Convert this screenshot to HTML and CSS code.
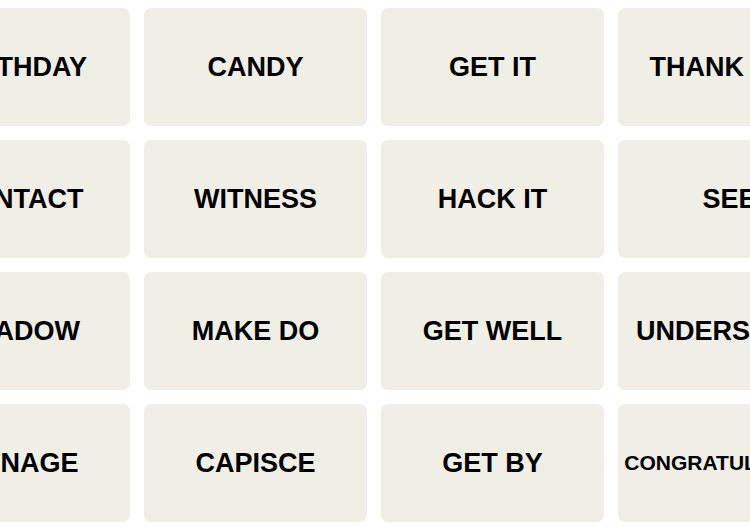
FILE: index.html
```html
<!DOCTYPE html>
<html lang="en">
<head>
  <meta charset="UTF-8" />
  <meta name="viewport" content="width=device-width, initial-scale=1.0"/>
  <title>Connections</title>
  <link rel="stylesheet" href="styles.css">
</head>
<body>
  <div class="board">
    <button class="tile">BIRTHDAY</button>
    <button class="tile">CANDY</button>
    <button class="tile">GET IT</button>
    <button class="tile">THANK YOU</button>

    <button class="tile">CONTACT</button>
    <button class="tile">WITNESS</button>
    <button class="tile">HACK IT</button>
    <button class="tile">SEE</button>

    <button class="tile">SHADOW</button>
    <button class="tile">MAKE DO</button>
    <button class="tile">GET WELL</button>
    <button class="tile">UNDERSTAND</button>

    <button class="tile">MANAGE</button>
    <button class="tile">CAPISCE</button>
    <button class="tile">GET BY</button>
    <button class="tile small">CONGRATULATIONS</button>
  </div>
</body>
</html>
```

FILE: styles.css
```css
body {
  margin: 0;
  background: #fff;
  font-family: 'Liberation Sans', Arial, sans-serif;
  overflow: hidden;
}

.board {
  display: grid;
  grid-template-columns: repeat(4, 223px);
  grid-auto-rows: 118px;
  gap: 14px;
  margin-left: -93px;
  padding-top: 8px;
}

.tile {
  display: flex;
  align-items: center;
  justify-content: center;
  background: #efefe6;
  border: none;
  border-radius: 7px;
  padding: 0;
  color: #000;
  font-family: inherit;
  font-size: 27px;
  font-weight: bold;
  white-space: nowrap;
  cursor: pointer;
}

.tile.small {
  font-size: 21px;
}
```
